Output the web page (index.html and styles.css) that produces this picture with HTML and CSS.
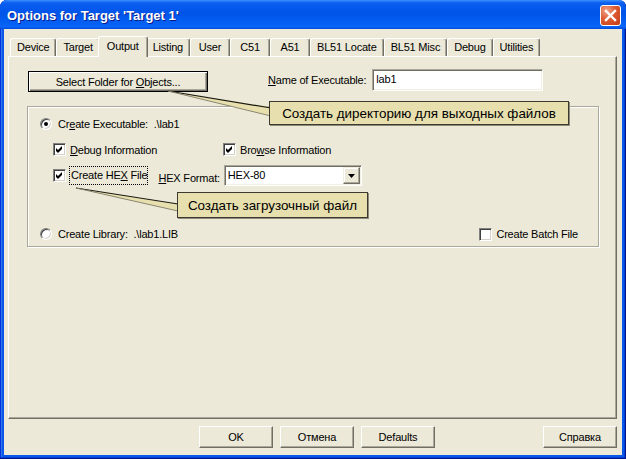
FILE: index.html
```html
<!DOCTYPE html>
<html lang="en">
  <head>
    <meta charset="UTF-8" />
    <title>Options for Target 'Target 1'</title>
    <link rel="stylesheet" href="styles.css">
  </head>
  <body>
    <div class="window">
      <div class="titlebar">
        <span class="title">Options for Target 'Target 1'</span>
        <span class="close">
          <svg width="19" height="19" viewBox="0 0 19 19">
            <path d="M5 5 L14 14 M14 5 L5 14" stroke="#fff" stroke-width="2.4" stroke-linecap="square" />
          </svg>
        </span>
      </div>
      <div class="client">
        <div class="tabs">
          <span class="tab">Device</span>
          <span class="tab">Target</span>
          <span class="tab active">Output</span>
          <span class="tab">Listing</span>
          <span class="tab">User</span>
          <span class="tab">C51</span>
          <span class="tab">A51</span>
          <span class="tab">BL51 Locate</span>
          <span class="tab">BL51 Misc</span>
          <span class="tab">Debug</span>
          <span class="tab">Utilities</span>
        </div>
        <div class="panel">
          <div class="row-top">
            <button class="btn folder">Select Folder for <u>O</u>bjects...</button>
            <span class="exe-label"><u>N</u>ame of Executable:</span>
            <div class="field exe">lab1</div>
          </div>
          <div class="group">
            <div class="g-row r1">
              <span class="radio on"></span>
              <span class="lbl">Cr<u>e</u>ate Executable:&nbsp; .\lab1</span>
            </div>
            <div class="g-row r2">
              <span class="opt opt-debug">
                <span class="check"><svg width="11" height="11" viewBox="0 0 11 11"><path d="M2 4 L4 6 L8 2 L8 5 L4 9 L2 7 Z" /></svg></span>
                <span class="lbl"><u>D</u>ebug Information</span>
              </span>
              <span class="opt">
                <span class="check"><svg width="11" height="11" viewBox="0 0 11 11"><path d="M2 4 L4 6 L8 2 L8 5 L4 9 L2 7 Z" /></svg></span>
                <span class="lbl">Bro<u>w</u>se Information</span>
              </span>
            </div>
            <div class="g-row r3">
              <span class="check hex-check"><svg width="11" height="11" viewBox="0 0 11 11"><path d="M2 4 L4 6 L8 2 L8 5 L4 9 L2 7 Z" /></svg></span>
              <span class="lbl focus">Create HE<u>X</u> File</span>
              <span class="lbl hexfmt"><u>H</u>EX Format:</span>
              <div class="combo">
                <span class="combo-text">HEX-80</span>
                <span class="combo-btn"><svg width="7" height="4" viewBox="0 0 7 4"><path d="M0 0 H7 L3.5 4 Z" /></svg></span>
              </div>
            </div>
            <div class="g-row r4">
              <span class="radio"></span>
              <span class="lbl">Create Library:&nbsp; .\lab1.LIB</span>
              <span class="opt batch">
                <span class="check"></span>
                <span class="lbl">Create Batch File</span>
              </span>
            </div>
          </div>
        </div>
        <div class="buttons">
          <button class="btn">OK</button>
          <button class="btn">Отмена</button>
          <button class="btn">Defaults</button>
          <button class="btn help">Справка</button>
        </div>
      </div>

      <svg class="tails" width="626" height="459" viewBox="0 0 626 459">
        <polygon points="168,91 271,107 271,116" fill="#e7dfae" />
        <line x1="168" y1="91" x2="271" y2="108" stroke="#1a1a14" stroke-width="1.2" />
        <line x1="168" y1="91" x2="271" y2="116" stroke="#8a8670" stroke-width="1" />
        <polygon points="76,188 178,204 178,211" fill="#e7dfae" />
        <line x1="76" y1="188" x2="178" y2="204" stroke="#1a1a14" stroke-width="1.2" />
        <line x1="76" y1="188" x2="178" y2="211" stroke="#8a8670" stroke-width="1" />
      </svg>
      <div class="tip tip-folder">Создать директорию для выходных файлов</div>
      <div class="tip tip-hex">Создать загрузочный файл</div>
    </div>
  </body>
</html>
```

FILE: styles.css
```css
* {
  box-sizing: border-box;
}
body {
  margin: 0;
  background: #fff;
  font-family: "Liberation Sans", Arial, sans-serif;
  font-size: 11px;
  color: #000;
}
u {
  text-decoration: underline;
  text-underline-offset: 1px;
}
.window {
  position: relative;
  width: 626px;
  height: 459px;
  display: flex;
  flex-direction: column;
  padding: 0 4px 4px;
  background: #0a57e8;
  border-radius: 7px 7px 0 0;
  box-shadow: inset -1px -1px #00138c, inset 1px 0 #0831d9, inset -2px -2px #0040d8, inset 2px 0 #2b78f0;
  overflow: hidden;
}
.titlebar {
  height: 29px;
  margin: 0 -4px;
  display: flex;
  align-items: flex-start;
  padding: 5px 5px 0 7px;
  border-radius: 7px 7px 0 0;
  background: linear-gradient(180deg, #3b90fd, #0a5ef0 10%, #0054e8 45%, #0562f4 85%, #0a66f8 92%, #0049d8 100%);
}
.title {
  font-weight: bold;
  font-size: 13px;
  line-height: 21px;
  color: #fff;
  text-shadow: 1px 1px #0a1a8a;
}
.close {
  margin-left: auto;
  width: 21px;
  height: 21px;
  display: flex;
  align-items: center;
  justify-content: center;
  border: 1px solid #fff;
  border-radius: 3px;
  background: radial-gradient(circle at 30% 25%, #f0a58a, #dd5a33 45%, #c23d17 100%);
}
.client {
  flex: 1;
  display: flex;
  flex-direction: column;
  padding-top: 7px;
  background: #ece9d8;
  letter-spacing: -0.2px;
}

/* tab strip */
.tabs {
  position: relative;
  z-index: 1;
  display: flex;
  align-items: flex-end;
  height: 20px;
  padding-left: 6px;
}
.tab {
  min-width: 40px;
  height: 18px;
  padding: 0 6px;
  line-height: 17px;
  text-align: center;
  background: #ece9d8;
  border: 1px solid;
  border-bottom: none;
  border-color: #fff #716f64 #fff #fff;
  border-radius: 3px 3px 0 0;
  box-shadow: inset -1px 0 #aca899;
  white-space: nowrap;
}
.tab.active {
  position: relative;
  z-index: 2;
  height: 21px;
  margin: 0 -2px -1px;
  padding: 0 8px;
  line-height: 18px;
}
.panel {
  height: 363px;
  margin: 0 5px 0 4px;
  padding: 12px 0 0 18px;
  border: 1px solid;
  border-color: #fff #716f64 #716f64 #fff;
  box-shadow: inset -1px -1px #aca899;
}

/* buttons and fields */
.btn {
  width: 74px;
  height: 22px;
  padding: 0;
  font: inherit;
  letter-spacing: inherit;
  color: #000;
  background: #ece9d8;
  border: 1px solid;
  border-color: #fff #716f64 #716f64 #fff;
  box-shadow: inset -1px -1px #aca899;
}
.row-top {
  display: flex;
  align-items: flex-start;
}
.btn.folder {
  width: 180px;
  height: 21px;
  margin: 2px 0 0 1px;
  border-color: #000;
  box-shadow: inset 1px 1px #fff, inset -1px -1px #716f64, inset -2px -2px #aca899;
}
.exe-label {
  margin-left: 60px;
  line-height: 22px;
}
.field {
  width: 171px;
  height: 22px;
  margin-left: 6px;
  padding: 0 3px;
  line-height: 19px;
  background: #fff;
  border: 1px solid;
  border-color: #aca899 #fff #fff #aca899;
  box-shadow: inset 1px 1px #716f64, inset -1px -1px #f1efe2;
}

/* group box */
.group {
  width: 572px;
  height: 141px;
  margin-top: 14px;
  padding: 10px 20px 0 12px;
  border: 1px solid #aca899;
  box-shadow: inset 1px 1px #fff, 1px 1px #fff;
}
.g-row {
  display: flex;
  align-items: center;
}
.r1 {
  height: 13px;
}
.r2 {
  height: 13px;
  margin-top: 13px;
  padding-left: 13px;
}
.r3 {
  height: 21px;
  margin-top: 9px;
  padding-left: 13px;
}
.r4 {
  height: 14px;
  margin-top: 41px;
}
.opt {
  display: flex;
  align-items: center;
}
.opt-debug {
  width: 170px;
}
.batch {
  margin-left: auto;
}
.radio {
  position: relative;
  flex: none;
  width: 12px;
  height: 12px;
  margin-right: 6px;
  border-radius: 50%;
  background: #fff;
  border: 1px solid;
  border-color: #808080 #fff #fff #808080;
  box-shadow: inset 1px 1px #404040, inset -1px -1px #d4d0c8;
}
.radio.on::after {
  content: "";
  position: absolute;
  left: 3px;
  top: 3px;
  width: 4px;
  height: 4px;
  border-radius: 50%;
  background: #000;
}
.check {
  flex: none;
  display: flex;
  width: 13px;
  height: 13px;
  margin-right: 4px;
  background: #fff;
  border: 1px solid;
  border-color: #808080 #fff #fff #808080;
  box-shadow: inset 1px 1px #404040, inset -1px -1px #d4d0c8;
}
.check.hex-check {
  margin-right: 3px;
}
.lbl {
  white-space: nowrap;
}
.focus {
  padding: 1px 0 2px 1px;
  line-height: 14px;
  border: 1px dotted #000;
}
.hexfmt {
  align-self: flex-end;
  margin: 0 0 1px 10px;
  line-height: 13px;
}
.combo {
  display: flex;
  justify-content: space-between;
  width: 138px;
  height: 21px;
  margin-left: 4px;
  padding: 1px;
  background: #fff;
  border: 1px solid;
  border-color: #aca899 #fff #fff #aca899;
  box-shadow: inset 1px 1px #716f64, inset -1px -1px #f1efe2;
}
.combo-text {
  padding-left: 2px;
  line-height: 17px;
}
.combo-btn {
  display: flex;
  align-items: center;
  justify-content: center;
  width: 17px;
  height: 17px;
  background: #ece9d8;
  border: 1px solid;
  border-color: #f1efe2 #716f64 #716f64 #f1efe2;
  box-shadow: inset -1px -1px #aca899, inset 1px 1px #fff;
}

/* bottom button row */
.buttons {
  display: flex;
  gap: 7px;
  margin-top: 7px;
  padding: 0 5px 0 195px;
}
.btn.help {
  margin-left: auto;
}

/* balloon hints */
.tails {
  position: absolute;
  left: 0;
  top: 0;
  pointer-events: none;
}
.tip {
  position: absolute;
  display: flex;
  align-items: center;
  justify-content: center;
  font-size: 13.4px;
  white-space: nowrap;
  background: #e7dfae;
  border: 1px solid #3c3a30;
  box-shadow: 1px 1px #8c8a78;
}
.tip-folder {
  left: 269px;
  top: 101px;
  width: 300px;
  height: 24px;
}
.tip-hex {
  left: 177px;
  top: 192px;
  width: 191px;
  height: 26px;
}
```
